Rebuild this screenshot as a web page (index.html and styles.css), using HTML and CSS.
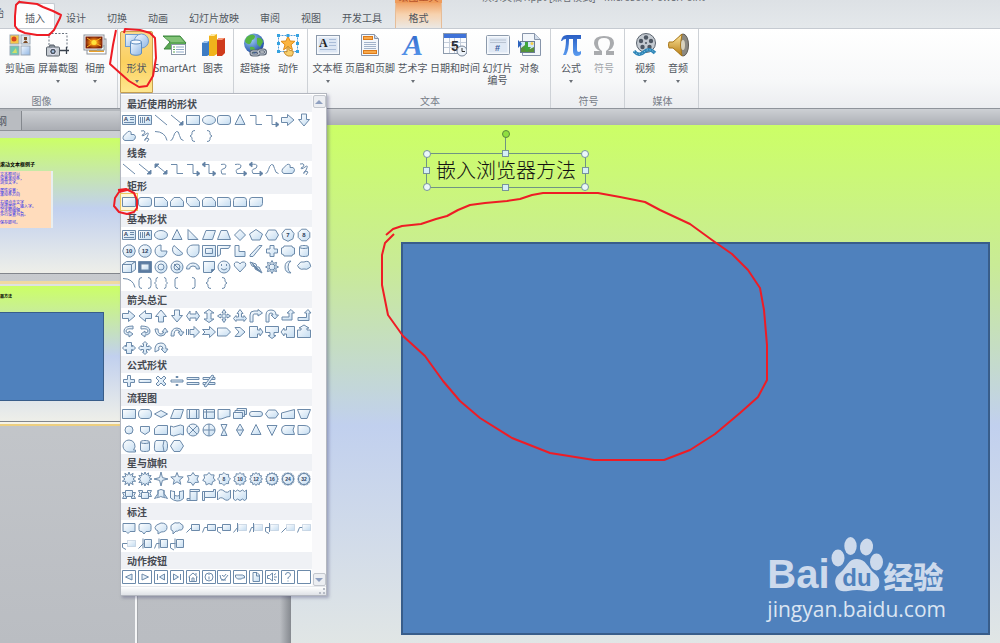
FILE: index.html
```html
<!DOCTYPE html>
<html lang="zh-CN">
<head>
<meta charset="utf-8">
<title>演示文稿 - Microsoft PowerPoint</title>
<link rel="stylesheet" href="styles.css">
</head>
<body>
<svg class="defs" aria-hidden="true">
  <defs>
    <linearGradient id="gShape" x1="0" y1="0" x2="1" y2="1"><stop offset="0" stop-color="#fff"/><stop offset="1" stop-color="#c3dcf1"/></linearGradient>
    <linearGradient id="gBlue" x1="0" y1="0" x2="1" y2="1"><stop offset="0" stop-color="#f4f9ff"/><stop offset="1" stop-color="#8fb6e4"/></linearGradient>
    <radialGradient id="gGlobe" cx=".35" cy=".3" r=".8"><stop offset="0" stop-color="#9fd0f8"/><stop offset="1" stop-color="#123f9c"/></radialGradient>
    <linearGradient id="gGold" x1="0" y1="0" x2="0" y2="1"><stop offset="0" stop-color="#ffe9a0"/><stop offset="1" stop-color="#b67a10"/></linearGradient>
    <linearGradient id="gPi" x1="0" y1="0" x2="0" y2="1"><stop offset="0" stop-color="#2a5fc4"/><stop offset="1" stop-color="#5b9cf0"/></linearGradient>
    <radialGradient id="gPhoto"><stop offset="0" stop-color="#ffe13a"/><stop offset=".5" stop-color="#e07a10"/><stop offset="1" stop-color="#7c1f08"/></radialGradient>
  </defs>
</svg>
<div class="app">
  <header class="top">
    <div class="titlebar"><span class="context-title">绘图工具</span><span class="doc-title">演示文稿1.ppt [兼容模式] - Microsoft PowerPoint</span></div>
    <nav class="tabs">
      <button class="tab tab-cut">开始</button>
      <button class="tab tab-active">插入</button>
      <button class="tab">设计</button>
      <button class="tab">切换</button>
      <button class="tab">动画</button>
      <button class="tab">幻灯片放映</button>
      <button class="tab">审阅</button>
      <button class="tab">视图</button>
      <button class="tab">开发工具</button>
      <button class="tab tab-context">格式</button>
    </nav>
  </header>

  <div class="ribbon">
    <section class="group group-images">
      <div class="tools">
        <button class="tool w32"><svg class="icon" viewBox="0 0 24 24"><rect x="2" y="2" width="9" height="9" fill="#f6c64a" stroke="#9aa7b5"/><circle cx="6" cy="6" r="2.5" fill="#d9471f"/><rect x="13" y="2" width="9" height="9" fill="#dfe5ea" stroke="#9aa7b5"/><path d="M15 10q3-5 5 0zM16 4h3v3h-3z" fill="#7a4a24"/><rect x="2" y="13" width="9" height="9" fill="#6fc7b1" stroke="#9aa7b5"/><path d="M4 20l4-5 1 5z" fill="#cfe06b"/><rect x="13" y="13" width="9" height="9" fill="url(#gBlue)" stroke="#9aa7b5"/></svg><span>剪贴画</span></button>
        <button class="tool w42"><svg class="icon" viewBox="0 0 24 24"><path d="M3 12V.5h18V16" fill="none" stroke="#6b7480" stroke-dasharray="2 1.5"/><path d="M14 17.500h9M20.500 14v7" stroke="#39424e" stroke-width="1.3"/><rect x=".5" y="14" width="13" height="9" rx="1" fill="#c6ccd2" stroke="#59616b"/><path d="M3 14l1-2h4l1 2" fill="#88919b" stroke="#59616b"/><circle cx="7" cy="18.5" r="3.3" fill="#4a5460" stroke="#eef"/><circle cx="7" cy="18.5" r="1.2" fill="#a9c6e8"/></svg><span>屏幕截图</span><i class="arrow"></i></button>
        <button class="tool w30"><svg class="icon" viewBox="0 0 24 24"><rect x="4" y="6" width="19" height="15" fill="#fff" stroke="#8b9199"/><rect x="6" y="8" width="15" height="11" fill="#e9a12a"/><rect x="1" y="2" width="20" height="15" fill="#fff" stroke="#8b9199"/><rect x="2.5" y="3.5" width="17" height="12" fill="url(#gPhoto)"/><path d="M4 5l6 4M18 5l-7 4M4 14l6-4M18 13l-6-3" stroke="#ffb21d"/><circle cx="11" cy="9.5" r="2.5" fill="#ffe33c"/><path d="M14 17q5 0 7-5v5z" fill="#f5f7f9" stroke="#9aa"/></svg><span>相册</span><i class="arrow"></i></button>
      </div>
      <h2 class="group-name">图像</h2>
    </section>

    <section class="group group-illustrations">
      <div class="tools">
        <div class="menu-anchor">
          <button class="tool tool-open w33" aria-expanded="true"><svg class="icon" viewBox="0 0 24 24"><rect x=".5" y="1.5" width="14" height="12" fill="url(#gBlue)" stroke="#6f9bce"/><circle cx="16.5" cy="8" r="7" fill="url(#gBlue)" stroke="#6f9bce"/><path d="M5.500 9v11c0 3 11 3 11 0V9z" fill="url(#gBlue)" stroke="#5d8cc0"/><ellipse cx="11" cy="9" rx="5.500" ry="2" fill="#f4f9ff" stroke="#5d8cc0"/></svg><span>形状</span><i class="arrow"></i></button>
          <div class="shapes-menu">
            <div class="menu-main">
              <div class="gallery" id="gallery"></div>
              <div class="scroll"><button class="scroll-btn" aria-label="向上滚动"><i class="up"></i></button><button class="scroll-btn" aria-label="向下滚动"><i class="down"></i></button></div>
            </div>
            <div class="menu-foot"><svg class="grip" viewBox="0 0 8 8"><path d="M5 1h2v2H5zM5 5h2v2H5zM1 5h2v2H1z" fill="#b7bcc6"/></svg></div>
          </div>
        </div>
        <button class="tool w42"><svg class="icon" viewBox="0 0 24 24"><path d="M0 3h17l6 7-6 6H1l6-7z" fill="#5ba854" stroke="#3e8840"/><path d="M1 4h16l4 5H8z" fill="#83c377"/><rect x="8.5" y="11.5" width="14" height="10" fill="#fff" stroke="#8b98a8"/><path d="M10 14h2M10 16.500h2M10 19h2" stroke="#5ba854"/><path d="M13 14h8M13 16.500h8M13 19h8" stroke="#8fa9c8"/></svg><span>SmartArt</span></button>
        <button class="tool w32"><svg class="icon" viewBox="0 0 24 24"><path d="M1 10l3-2h4v14l-2 1H1z" fill="#3d7cc4"/><path d="M1 10l3-2h4l-2 2z" fill="#9cc4ee"/><path d="M8 3l3-2h5v20l-3 2H8z" fill="#f0b41c"/><path d="M8 3l3-2h5l-3 2z" fill="#ffeaa0"/><path d="M16 7l2-2h6v15l-3 3h-5z" fill="#cf3b1c"/><path d="M16 7l2-2h6l-3 2z" fill="#f69a78"/></svg><span>图表</span></button>
      </div>
    </section>

    <section class="group group-links">
      <div class="tools">
        <button class="tool w34"><svg class="icon" viewBox="0 0 24 24"><circle cx="11" cy="10.5" r="10" fill="url(#gGlobe)"/><path d="M5 3q5-3 7 0 0 3-3 4-1 5-4 4-3-1-3-3 0-3 3-5zM14 5q5-1 6 4l-3 5-3-3zM7 14q5-1 5 3l-2 3q-3-2-3-6z" fill="#57b444"/><g fill="none" stroke="#5b6675" stroke-width="3"><rect x="8" y="18" width="8" height="4" rx="2"/><rect x="15" y="17" width="7.500" height="4" rx="2"/></g><g fill="none" stroke="#c5cdd8"><rect x="8" y="18" width="8" height="4" rx="2"/><rect x="15" y="17" width="7.500" height="4" rx="2"/></g></svg><span>超链接</span></button>
        <button class="tool w30"><svg class="icon" viewBox="0 0 24 24"><rect x="2.5" y="2.5" width="19" height="16" fill="#fdfdfd" stroke="#4c9bdc" stroke-dasharray="2 1"/><path d="M12 3l2 5 5 .3-4 3.500 1.500 5L12 14l-4.500 2.800L9 11.800 5 8.300 10 8z" fill="#fbb440" stroke="#e28c18"/><g fill="#35a2e0"><path d="M1 1h3v3H1zM10.500 1h3v3h-3zM20 1h3v3h-3zM1 9h3v3H1zM20 9h3v3h-3zM1 17h3v3H1zM20 17h3v3h-3z"/></g><path d="M11 14q1-1 2 0v3l4 1q1 2-1 5h-4q-3-1-4-4 1-1 3 0z" fill="#f8cf6c" stroke="#c48a2c"/></svg><span>动作</span></button>
      </div>
    </section>

    <section class="group group-text">
      <div class="tools">
        <button class="tool w31"><svg class="icon" viewBox="0 0 24 24"><rect x=".5" y="2.5" width="23" height="19" fill="#f5f8fc" stroke="#8c9aac"/><rect x="2.5" y="4.5" width="19" height="15" fill="#dce6f4"/><text x="3" y="14" font-family="Liberation Serif" font-weight="700" font-size="12" fill="#222">A</text><path d="M13 6.500h7M13 9.500h7M13 12.500h7M4 16.500h16" stroke="#a9bcd8"/></svg><span>文本框</span><i class="arrow"></i></button>
        <button class="tool w52"><svg class="icon" viewBox="0 0 24 24"><path d="M3.500 1.500h13l4 4v17h-17z" fill="#f4f7fb" stroke="#8795ab"/><path d="M16.500 1.500v4h4" fill="#cfd9e8" stroke="#8795ab"/><rect x="5.5" y="3.5" width="9" height="3" fill="#f9a94a" stroke="#dc7b1b"/><rect x="5.5" y="17.5" width="13" height="3" fill="#f9a94a" stroke="#dc7b1b"/><path d="M6 9.500h12M6 11.500h12M6 13.500h12M6 15.500h12" stroke="#a3b3ca"/></svg><span>页眉和页脚</span></button>
        <button class="tool w31"><svg class="icon" viewBox="0 0 24 24"><text x="2" y="22" font-family="Liberation Serif" font-weight="700" font-style="italic" font-size="30" fill="url(#gPi)">A</text></svg><span>艺术字</span><i class="arrow"></i></button>
        <button class="tool w52"><svg class="icon" viewBox="0 0 24 24"><rect x=".5" y=".5" width="23" height="20" fill="#fbfcfe" stroke="#8c9aac"/><rect x="1" y="1" width="22" height="4" fill="#3f72d8"/><path d="M6.500 5v15M11.500 5v15M17.500 5v15M1 9.500h22M1 14.500h22" stroke="#c5cedb"/><text x="8" y="18" font-family="Liberation Sans" font-weight="700" font-size="14" fill="#2b3038">5</text><circle cx="19" cy="18" r="5" fill="#edf3fa" stroke="#78869a"/><path d="M19 15v3.500h3" fill="none" stroke="#333"/></svg><span>日期和时间</span></button>
        <button class="tool w31"><svg class="icon" viewBox="0 0 24 24"><rect x=".5" y="2.5" width="23" height="19" rx="1" fill="#f5f8fc" stroke="#8c9aac"/><rect x="2.5" y="4.5" width="19" height="15" fill="#dfe8f4"/><path d="M4 7h16M4 9.500h16" stroke="#b8c2d0"/><text x="9" y="18" font-family="Liberation Sans" font-weight="700" font-size="9" fill="#34589c">#</text></svg><span>幻灯片<br>编号</span></button>
        <button class="tool w31"><svg class="icon" viewBox="0 0 24 24"><path d="M4.500.500h12l6 6v16h-18z" fill="#f2f6fb" stroke="#8795ab"/><path d="M16.500.500v6h6" fill="#d3deec" stroke="#8795ab"/><rect x="2.5" y="8.5" width="14" height="11" fill="#cfe6f6" stroke="#6a7d94"/><path d="M3 19v-4l4-3 5 4 4-2v5z" fill="#5a8f3b"/><circle cx="14" cy="10.5" r="1.5" fill="#f6d04a"/><path d="M0 7l4 4-4 4z" fill="#2b62bd"/><path d="M7 9h3v5h3l-4 5-4-5h2z" fill="#3ea53c"/></svg><span>对象</span></button>
      </div>
      <h2 class="group-name">文本</h2>
    </section>

    <section class="group group-symbols">
      <div class="tools">
        <button class="tool w32"><svg class="icon" viewBox="0 0 24 24"><path d="M2 8Q3 2 8 2h14v4h-4v11q0 2 2 2l2-1v3q-1 2-4 2-4 0-4-5V6h-4q0 11-3 16H4q3-6 3-16-3 0-4 2z" fill="url(#gPi)"/></svg><span>公式</span><i class="arrow"></i></button>
        <button class="tool tool-off w32" disabled><svg class="icon" viewBox="0 0 24 24"><path d="M2 22v-4h6Q2 15 2 10 2 3 12 3t10 7q0 5-6 8h6v4h-8v-4q4-3 4-8 0-5-6-5t-6 5q0 5 4 8v4z" fill="#a9abae"/></svg><span>符号</span></button>
      </div>
      <h2 class="group-name">符号</h2>
    </section>

    <section class="group group-media">
      <div class="tools">
        <button class="tool w32"><svg class="icon" viewBox="0 0 24 24"><circle cx="13" cy="10" r="9.500" fill="#c3c9d0" stroke="#5a636e"/><g fill="#4d5662"><circle cx="13" cy="4.500" r="2.200"/><circle cx="18" cy="8" r="2.200"/><circle cx="16.500" cy="14" r="2.200"/><circle cx="9.500" cy="14" r="2.200"/><circle cx="8" cy="8" r="2.200"/><circle cx="13" cy="10" r="1"/></g><path d="M1 18q5 6 10 1t11 1" fill="none" stroke="#2f86b8" stroke-width="3.500"/><path d="M1 18q5 6 10 1t11 1" fill="none" stroke="#a8daf2" stroke-dasharray="1 2"/></svg><span>视频</span><i class="arrow"></i></button>
        <button class="tool w32"><svg class="icon" viewBox="0 0 24 24"><ellipse cx="17" cy="12" rx="5.500" ry="11" fill="#8b8982" stroke="#5c5a55"/><path d="M3 9h4l9-8q-3 11 0 22l-9-8H3q-1-3 0-6z" fill="url(#gGold)" stroke="#a97719"/><ellipse cx="17" cy="12" rx="2" ry="5" fill="#d8d2bd"/></svg><span>音频</span><i class="arrow"></i></button>
      </div>
      <h2 class="group-name">媒体</h2>
    </section>
  </div>

  <main class="workspace">
    <aside class="pane">
      <div class="pane-tabs"><button class="pane-tab">纲</button></div>
      <div class="thumbs">
        <article class="thumb">
          <h3 class="thumb-title">滚动文本框例子</h3>
          <div class="thumb-box"><p>文本框可以<br>设置滚动条，<br>浏览文字。</p><p>属性设置：<br>滚动条方向</p><p>右键点击文字<br>选择属性，输入字。<br>文本框编辑，<br>多行设置为真。</p><p>保存即可。</p></div>
        </article>
        <article class="thumb thumb-selected">
          <h3 class="thumb-title small">器方法</h3>
          <div class="thumb-rect"></div>
        </article>
      </div>
    </aside>
    <div class="splitter"></div>
    <section class="editor">
      <div class="slide">
        <div class="blue-rect"></div>
        <div class="text-box">嵌入浏览器方法
          <i class="stem"></i><i class="knob rotate"></i>
          <i class="knob tl"></i><i class="knob tr"></i><i class="knob bl"></i><i class="knob br"></i>
          <i class="square t"></i><i class="square b"></i><i class="square l"></i><i class="square r"></i>
        </div>
        <div class="watermark">
          <div class="brand"><span class="bai">Bai</span><svg class="paw" viewBox="0 0 54 58"><ellipse cx="8" cy="23" rx="6.500" ry="8.500"/><ellipse cx="20.500" cy="11" rx="6.200" ry="9"/><ellipse cx="36.500" cy="12" rx="6.500" ry="8.500" transform="rotate(10 36.500 12)"/><ellipse cx="46.500" cy="27" rx="6.500" ry="8.500"/><path d="M27 24c-9 0-10 8-16 13-5 4-7 8-5 14 2 5 7 6 12 5q9-2 18 0c6 1 11 0 13-5 1-6 0-9-5-13-6-5-8-14-17-14z"/><text x="27" y="51" text-anchor="middle">du</text></svg><span class="jingyan">经验</span></div>
          <div class="site">jingyan.baidu.com</div>
        </div>
      </div>
    </section>
  </main>

  <svg class="ink" width="1000" height="643" viewBox="0 0 1000 643" aria-hidden="true">
    <path d="M20 1L16 5 15 16 15 26 18 30 25 33 37 35 49 35 54 30 60 18 61 15 53 11 43 7 37 4 28 3 20 2"/>
    <path d="M116 30L113 45 110 64 120 73 129 81 139 87 147 86 153 76 156 58 155 38 150 33 140 30 125 29 124 33"/>
    <path d="M118 190L126 189 134 193 137 200 137 208 134 212 127 214 119 212 114 206 115 198 119 192 127 190"/>
    <path d="M386 235L393 229 402 226 421 224 436 219 447 216 458 210 470 205 485 203 507 201 520 199 532 195 543 193 598 193 620 197 645 202 660 210 690 224 712 240 732 254 748 270 760 288 764 310 767 345 767 380 758 397 740 413 715 434 690 450 664 460 594 460 550 453 512 438 480 418 460 401 443 381 425 356 403 336 388 315 382 285 382 255 385 243 394 234"/>
  </svg>
</div>
<script src="gallery.js"></script>
</body>
</html>
```
FILE: styles.css
```css
* { box-sizing: border-box; }
body {
  margin: 0;
  overflow: hidden;
  font-family: "Noto Sans", "Noto Sans CJK SC", sans-serif;
  font-size: 10px;
  line-height: 12px;
  color: #50565e;
}
button {
  margin: 0;
  padding: 0;
  border: 0;
  background: none;
  font: inherit;
  color: inherit;
}
h2, h3, p { margin: 0; font-weight: 400; font-size: inherit; }
.defs { position: absolute; width: 0; height: 0; }
.app { position: relative; display: flex; flex-direction: column; height: 100vh; overflow: hidden; }

/* Title bar and tabs */
.top { background: linear-gradient(#dde1e5, #e4e8eb); border-bottom: 1px solid #c5cad1; }
.titlebar { display: flex; align-items: flex-end; height: 3px; overflow: hidden; white-space: nowrap; color: #6b6f75; }
.context-title { width: 47px; margin-left: 395px; text-align: center; background: #ef9c5c; color: #b8542a; }
.doc-title { margin-left: 40px; }
.tabs { display: flex; gap: 1px; height: 25px; }
.tab { padding: 4px 10px 0; white-space: nowrap; }
.tab-cut { display: flex; justify-content: flex-end; width: 14px; padding: 4px 10px 0 0; overflow: hidden; }
.tab-active { background: linear-gradient(#fdfdfe, #fff); border: 1px solid #c5cad1; border-bottom: 0; padding: 3px 9px 0; border-radius: 2px 2px 0 0; }
.tab-context { width: 47px; margin-left: 2px; background: linear-gradient(#f0a468, #f7d2ae 45%, #ebe8e4); border: solid #e6bd98; border-width: 0 1px; }

/* Ribbon */
.ribbon { display: flex; height: 80px; background: linear-gradient(#fff, #f7f8f9 65%, #ebedf0); border-bottom: 1px solid #8f949b; }
.group { display: flex; flex-direction: column; padding: 2px 2px 0 4px; border-right: 1px solid #cdd1d6; }
.tools { display: flex; gap: 1px; height: 62px; }
.tool { display: flex; flex-direction: column; align-items: center; height: 62px; padding-top: 2px; white-space: nowrap; }
.icon { width: 24px; height: 24px; margin-bottom: 5px; }
.w30 { width: 30px; }
.w31 { width: 31px; }
.w32 { width: 32px; }
.w33 { width: 33px; }
.w34 { width: 34px; }
.w42 { width: 42px; }
.w52 { width: 52px; }
.tool-open { background: linear-gradient(#fbd98c, #fbd05f 50%, #fee78f); border: 1px solid #c9a14e; padding-top: 1px; border-radius: 2px 2px 0 0; }
.tool-off { color: #a3a6aa; }
.arrow { margin-top: 6px; border: 2px solid transparent; border-top: 3px solid #6b7077; border-bottom: 0; }
.group-name { padding-top: 2px; text-align: center; color: #767c87; }
.group-images { width: 118px; }
.group-images .group-name { padding-right: 36px; }
.group-illustrations { width: 116px; padding: 2px 2px 0; }
.group-links { width: 74px; }
.group-text { width: 243px; }
.group-symbols { width: 74px; }
.group-media { width: 74px; }

/* Shapes menu */
.menu-anchor { position: relative; }
.shapes-menu {
  position: absolute;
  z-index: 5;
  top: 62px;
  left: 0;
  width: 207px;
  padding-top: 1px;
  background: #fff;
  border: 1px solid #b3b7bf;
  box-shadow: 2px 2px 3px rgba(60, 60, 110, .35);
}
.menu-main { display: flex; }
.gallery { width: 191px; padding-bottom: 1px; }
.gallery-name { height: 17px; padding: 2px 0 0 6px; background: #eff1f5; font-weight: 700; line-height: 14px; color: #464a52; }
.gallery-grid { display: grid; grid-template-columns: repeat(12, minmax(0, 1fr)); grid-auto-rows: 16px; }
.shape { display: flex; justify-content: center; }
.shape-svg { flex: none; width: 16px; height: 16px; fill: url(#gShape); stroke: #6c8aaa; stroke-linejoin: round; }
.shape-svg .bare { fill: none; }
.shape-svg .solid { fill: #5b7ba1; }
.shape-svg .plain { fill: #fff; }
.shape-svg .ghost { stroke: #a9bdd3; stroke-dasharray: 1 1; }
.shape-svg text { fill: #2c3e5c; stroke: none; font-family: "Liberation Sans", sans-serif; font-weight: 700; text-anchor: middle; }
.shape-picked { background: #fff7d8; box-shadow: 0 0 0 1px #ecc75c; }
.scroll { display: flex; flex: 1; flex-direction: column; align-items: center; justify-content: space-between; background: #f8f8fa; }
.scroll-btn { display: grid; place-items: center; width: 13px; height: 13px; background: #eceef2; border: 1px solid #c3c7ce; border-radius: 2px; }
.up { border: 4px solid transparent; border-top: 0; border-bottom: 4px solid #8fa0c0; }
.down { border: 4px solid transparent; border-bottom: 0; border-top: 4px solid #8fa0c0; }
.menu-foot { display: flex; justify-content: flex-end; height: 9px; border-top: 1px solid #e6e8ec; background: linear-gradient(#fff, #dfe2e7); }
.grip { width: 8px; height: 8px; }

/* Workspace */
.workspace { display: grid; grid-template-columns: 135px 3px 1fr; flex: 1; min-height: 0; }
.pane { display: flex; flex-direction: column; background: linear-gradient(#cdd0d4, #c4c7cb 50%, #babdc2); overflow: hidden; }
.pane-tabs { height: 22px; margin-bottom: 7px; background: linear-gradient(#cccfd3, #abaeb4); border-top: 2px solid #b4b8bd; border-bottom: 1px solid #8e9298; }
.pane-tab { display: flex; justify-content: flex-end; align-items: center; width: 22px; height: 19px; padding-right: 14px; border-right: 1px solid #84888e; background: #b9bcc1; overflow: hidden; }
.thumbs { display: flex; flex-direction: column; gap: 12px; }
.thumb { height: 136px; padding-top: 24px; background: linear-gradient(#ccff66, #c1d0ee 52%, #eeefe9); border-bottom: 1px solid #82868c; }
.thumb-title { height: 9px; font-size: 5px; line-height: 5px; font-weight: 700; color: #000; }
.thumb-box { width: 53px; height: 57px; padding-top: 2px; background: #ffdcbc; border-right: 2px solid #e8eef0; color: #2222ee; font-size: 4px; line-height: 4px; font-weight: 700; }
.thumb-box p { margin-bottom: 4px; }
.thumb-selected { padding-top: 8px; box-shadow: 0 -2px #dfe1e2, 0 -5px #f0d9a2, 0 2px #f6f3e6, 0 4px #edcf80; }
.thumb-title.small { height: 18px; font-size: 4px; }
.thumb-rect { width: 104px; height: 89px; background: #4f81bd; border: 1px solid #385d8a; border-left: 0; }
.splitter { background: #f5f6f7; border-right: 1px solid #a3a6ab; }
.editor { display: flex; padding: 16px 0 0 153px; background: linear-gradient(90deg, transparent 142px, #85898f 153px) no-repeat 0 16px, linear-gradient(#cdd0d4, #adb0b6 16px, #c4c7cb 17px, #babdc2); }
.slide { position: relative; flex: 1; background: linear-gradient(#ccff66, #c9eb96 27%, #c1d0ee 58%, #e8ebe3 110%); }
.blue-rect { position: absolute; inset: 117px 10px 8px 110px; background: #4f81bd; border: 2px solid #385d8a; }
.text-box {
  position: absolute;
  top: 28px;
  left: 135px;
  width: 160px;
  height: 35px;
  border: 1px solid #6f9483;
  text-align: center;
  font-size: 20px;
  line-height: 33px;
  font-weight: 300;
  white-space: nowrap;
  color: #111;
}
.knob, .square { position: absolute; width: 8px; height: 8px; background: #eaf7f9; border: 1px solid #78949a; }
.knob { border-radius: 50%; }
.square { width: 7px; height: 7px; background: #d5eff7; }
.tl { top: -4px; left: -4px; }
.tr { top: -4px; right: -4px; }
.bl { bottom: -4px; left: -4px; }
.br { bottom: -4px; right: -4px; }
.t { top: -4px; left: 75px; }
.b { bottom: -4px; left: 75px; }
.l { top: 13px; left: -4px; }
.r { top: 13px; right: -4px; }
.stem { position: absolute; top: -19px; left: 78px; height: 18px; border-left: 1px solid #6f9483; }
.rotate { top: -24px; left: 75px; background: #8fe03f; border-color: #5c8a3c; }

/* Watermark */
.watermark { position: absolute; right: 54px; bottom: 20px; color: #cddaec; }
.brand { display: flex; align-items: flex-end; height: 58px; }
.bai { font: 700 40px/38px "Liberation Sans", sans-serif; }
.paw { width: 54px; height: 58px; fill: #cddaec; }
.paw text { font: 700 24px "Liberation Sans", sans-serif; fill: #4f81bd; }
.jingyan { padding-bottom: 3px; font-family: "Noto Sans CJK SC", sans-serif; font-weight: 900; font-size: 30px; line-height: 30px; }
.site { padding-top: 2px; font-family: "Open Sans", "Noto Sans", sans-serif; font-size: 21px; line-height: 28px; color: #dbe5f2; }

.ink { position: absolute; z-index: 10; top: 0; left: 0; pointer-events: none; fill: none; stroke: #ee1c25; stroke-width: 2; stroke-linejoin: round; }
```
FILE: gallery.js
```js
// Shape outlines are drawn on a 16x16 grid. A plain string is a filled path;
// open() makes an unfilled one, and anything starting with "<" is raw markup.
const path = (d, cls = '') => `<path class="${cls}" d="${d}"/>`;
const open = d => path(d, 'bare');
const ghost = d => path(d, 'ghost');

const polygon = (n, r, turn = 0, inner = r) => {
  const pts = [];
  const count = inner === r ? n : n * 2;
  for (let i = 0; i < count; i++) {
    const a = -Math.PI / 2 + turn + (i * 2 * Math.PI) / count;
    const q = i % 2 ? inner : r;
    pts.push(`${(8 + q * Math.cos(a)).toFixed(1)} ${(8 + q * Math.sin(a)).toFixed(1)}`);
  }
  return `M${pts.join('L')}Z`;
};
const star = (n, r, inner) => polygon(n, r, 0, inner);
const label = (t, size = 6) => `<text x="8" y="10" font-size="${size}">${t}</text>`;
const numbered = (n, sides) => path(polygon(sides, 6.3, Math.PI / sides)) + label(n);
const seal = n => path(star(Math.min(n, 20), 6.5, 5)) + label(n, 5);
const action = glyph => path('M1.500 1.500h13v13h-13z', 'plain') + glyph;

const textBox = path('M1.500 3.500h13v9h-13z') + '<text x="5" y="9" font-size="6">A</text>' + open('M9 5.500h4M9 7.500h4M3 10.500h10');
const vertBox = path('M1.500 3.500h13v9h-13z') + '<text x="11" y="9" font-size="6">A</text>' + open('M3.500 5v6M5.500 5v6M7.500 5v6');
const rect = 'M1.500 3.500h13v9h-13z';
const round = 'M4 3.500h8q2.500 0 2.500 2.500v4q0 2.500-2.500 2.500H4Q1.500 12.500 1.500 10V6Q1.500 3.500 4 3.500z';
const ellipse = 'M1.500 8a6.500 4.500 0 1 1 13 0a6.500 4.500 0 1 1-13 0z';
const circle = 'M2 8a6 6 0 1 1 12 0a6 6 0 1 1-12 0z';
const triangle = 'M8 2.500L13 12.500H3z';
const line = open('M2 3l12 10');
const lineArrow = open('M2 3l11 9') + path('M14 13h-4l4-4z', 'solid');
const lineTwo = lineArrow + path('M2 3h4L2 7z', 'solid');
const elbow = open('M2 3.500h6v9h6');
const elbowArrow = elbow + path('M12 10l3 2.500-3 2.500z', 'solid');
const elbowTwo = elbowArrow + path('M4 1L1 3.500 4 6z', 'solid');
const sCurve = open('M5 3.500q5-1 5 1.500t-3 3-1 5h4');
const sArrow = open('M3 3.500q6-1 6 1.500t-3 3-1 4.500h7') + path('M12 10l3 2.500-3 2.500z', 'solid');
const sTwo = sArrow + path('M4 1L1 3.500 4 6z', 'solid');
const wave = open('M1.500 12.500q2 0 3-4t3-5 3 4 4 5');
const blob = 'M2.500 8L7 3.500q4-1 3 3 4-1 4.500 2 0 3-2.500 4H4q-3-1-1.500-4.500z';
const scribble = open('M4 3q4-1 4 1T5 7q0 2 4-1t1 3-2 2q1-2 4 0l-2 3');
const arc = open('M2 3.500q10 0 12 9');
const braceL = open('M10 2.500q-3 0-3 2v2L5 8l2 1.500v2q0 2 3 2');
const braceR = open('M6 2.500q3 0 3 2v2L11 8 9 9.500v2q0 2-3 2');
const right = 'M1.500 5.500h6v-3L14 8l-6.500 5.500v-3h-6z';
const left = 'M14.500 5.500h-6v-3L2 8l6.500 5.500v-3h6z';
const up = 'M5.500 14V8.500h-3L8 2l5.500 6.500h-3V14z';
const down = 'M5.500 2v5.500h-3L8 14l5.500-6.500h-3V2z';
const plus = 'M6 2.500h4V6h3.500v4H10v3.500H6V10H2.500V6H6z';
const hexagon = 'M4.500 3h7L14.500 8l-3 5h-7L1.500 8z';
const can = path('M3.500 4v8c0 2 9 2 9 0V4') + path('M3.500 4c0-2 9-2 9 0s-9 2-9 0z');
const parallelogram = 'M5 3.500h9.500l-3 9H1.500z';
const lineBox = d => open(d) + path('M6.500 4.500h8v6h-8z');
const ghostBox = d => open(d) + ghost('M6.500 4.500h8v6h-8z');
const sideBox = d => open(d) + path('M7.500 3.500h7v8h-7z') + open('M6 2.500v10');

const sections = [
  ['最近使用的形状', [textBox, vertBox, line, lineArrow, rect, ellipse, round, triangle, elbow, elbowArrow, right, down, blob, scribble, arc, wave, braceL, braceR]],
  ['线条', [line, lineArrow, lineTwo, elbow, elbowArrow, elbowTwo, sCurve, sArrow, sTwo, wave, blob, scribble]],
  ['矩形', [
    rect, round,
    'M1.500 3.500h9l4 4v5h-13z',
    'M5 3.500h6l3.500 4v5h-13v-5z',
    'M1.500 3.500H11l3.500 4v5H5l-3.500-4z',
    'M4 3.500h7l3.500 4v5h-13V6z',
    'M1.500 3.500H12q2.500 0 2.500 3v6h-13z',
    'M4 3.500h8q2.500 0 2.500 3v6h-13v-6q0-3 2.500-3z',
    'M4 3.500h10.500v6q0 3-3 3h-10v-6q0-3 2.500-3z'
  ]],
  ['基本形状', [
    textBox, vertBox, ellipse, triangle, 'M3 2.500l10 10H3z', parallelogram,
    'M5 3.500h6l3.500 9h-13z', 'M8 2.500L13.500 8 8 13.500 2.500 8z', 'M8 2.500L14.500 7 12 13H4L1.500 7z', hexagon, numbered(7, 7), numbered(8, 8),
    numbered(10, 10), numbered(12, 12), 'M8 8V2a6 6 0 1 0 6 6z', 'M5 2.500A6 6 0 1 0 14 10.500z', 'M14 2v6a6 6 0 1 1-6-6z',
    path('M1.500 2.500h13v11h-13z') + path('M4.500 5.500h7v5h-7z'),
    'M1.500 2.500h13l-2 3h-8v6l-3 2z', 'M3 2.500h4v6h6v5H3z', 'M2 12L11 2.500h3L5 13.500H2z', plus,
    'M4 3h8q0 2 2.500 2v6Q12 11 12 13H4q0-2-2.500-2V5Q4 5 4 3z', can,
    path('M1.500 5.500h9v8h-9z') + path('M1.500 5.500l4-3h9l-4 3z') + path('M10.500 5.500l4-3v8l-4 3z'),
    path('M1.500 2.500h13v11h-13z', 'solid') + path('M4 5h8v6H4z'),
    path(circle) + path('M5 8a3 3 0 1 1 6 0a3 3 0 1 1-6 0z'),
    path(circle) + open('M5 8a3 3 0 1 1 6 0a3 3 0 1 1-6 0zM5 5l6 6'),
    'M1.500 10a6.500 6 0 0 1 13 0h-3a3.500 3 0 0 0-7 0z',
    path('M2.500 2.500h11v8l-3 3h-8z') + path('M13.500 10.500h-3v3z', 'solid'),
    path(circle) + open('M5 9.500q3 3 6 0M5.500 5v2M10.500 5v2'),
    'M8 13L2.500 7q-1-4 2.500-4 2 0 3 2 1-2 3-2 3.500 0 2.500 4z',
    path('M2 3l6 2 1 3 2 0 3 6-7-4 0-2-3-1z') + path('M4 4l9 9-5-3z', 'solid'),
    path(star(8, 6.5, 4)) + path('M5 8a3 3 0 1 1 6 0a3 3 0 1 1-6 0z'),
    'M11 2Q5 2 5 8t6 6q-3-2-3-6t3-6z',
    'M3 9Q0 6 3 5q1-3 5-2 5-2 6 2 2 3-1 4-2 2-5 1-3 1-5-1z',
    arc, open('M5 2.500q-3 0-3 3v5q0 3 3 3M11 2.500q3 0 3 3v5q0 3-3 3'),
    open('M5 2.500q-2 0-2 2v2L1.500 8 3 9.500v2q0 2 2 2M11 2.500q2 0 2 2v2L14.500 8 13 9.500v2q0 2-2 2'),
    open('M9 2.500q-3 0-3 2v7q0 2 3 2'), open('M7 2.500q3 0 3 2v7q0 2-3 2'), braceL, braceR
  ]],
  ['箭头总汇', [
    right, left, up, down,
    'M1.500 8L5 3v3h6V3l3.500 5L11 13v-3H5v3z', 'M8 1.500L13 5h-3v6h3l-5 3.500L3 11h3V5H3z',
    'M8 1.500l2 3H9V7h2.500V6l3 2-3 2V9H9v2.500h1l-2 3-2-3h1V9H4.500v1l-3-2 3-2v1H7V4.500H6z',
    'M8 1.500l3 4H9.500V9H12V7.500l2.500 3-2.500 3V12H4v1.500l-2.500-3L4 7.500V9h2.500V5.500H5z',
    'M2 14V7q0-4 4-4h4V1.500L14.500 5 10 8V6H6q-1 0-1 2v6z',
    'M2 14V7q0-5 5-5t5 5h2.500L11 11 7 7h2q0-2-2-2T5 7v7z',
    'M2 12v-3h7V5H7l4-3.500L14.500 5H12v7z', 'M2 12.500v-3h8.500V5H8.500L12 1.500 15 5h-2v7.500z',
    'M12 2Q3 2 3 7q0 4 5 4v2l4-3-4-3v2Q5 9 5 7q0-3 7-2z', 'M4 2q9 0 9 5 0 4-5 4v2L4 10l4-3v2q3 0 3-2 0-3-7-2z',
    'M2 5q1 7 6 7 4 0 5-4h2l-3-4-3 4h2q-1 2-3 2-3 0-3-5z', 'M2 12q0-8 6-8 4 0 5 4h2l-3 4-3-4h2q-1-2-3-2-3 0-3 6z',
    path('M5 5.500h4v-3L14.500 8 9 13.500v-3H5z') + open('M1.500 5v6M3.500 5v6'),
    'M1.500 5.500h7v-3L14.500 8l-6 5.500v-3h-7L4 8z', 'M1.500 4h9l4 4-4 4h-9z', 'M3 3.500h5L13 8l-5 4.500H3L7 8z',
    'M1.500 2.500h8V6H12V4l3 4-3 4v-2H9.500v3.500h-8z', 'M1.500 2.500h13v6H10v3h2l-4 3-4-3h2v-3H1.500z',
    'M14.500 2.500h-8V6H4V4L1 8l3 4v-2h2.500v3.500h8z', 'M1.500 13.500V6H5V4H3l5-3 5 3h-2v2h3.500v7.500z',
    'M5.500 2.500h5v4h1V5l3 3-3 3V9.500h-1v4h-5v-4h-1V11l-3-3 3-3v1.500h1z',
    'M8 1.500L10.500 4H9.500v2.500H12V5.500L14.500 8 12 10.500v-1H9.500V12h1L8 14.500 5.500 12h1V9.500H4v1L1.500 8 4 5.500v1h2.500V4h-1z',
    'M2 12q-1-9 6-9 5 0 5 6h2l-3 4-4-4h2q0-3-3-3-2 0-1 4z'
  ]],
  ['公式形状', [
    'M6.500 2.500h3v4h4v3h-4v4h-3v-4h-4v-3h4z', 'M2 6.500h12v3H2z', 'M5 3l3 3 3-3 2 2-3 3 3 3-2 2-3-3-3 3-2-2 3-3-3-3z',
    path('M2 7h12v2H2z') + path('M7 3.500h2v1H7zM7 11.500h2v1H7z'), path('M2 4.500h12v2H2z') + path('M2 9.500h12v2H2z'),
    path('M2 4.500h12v2H2z') + path('M2 9.500h12v2H2z') + path('M11 2l2 1-8 11-2-1z')
  ]],
  ['流程图', [
    rect, 'M5 3.500h6q3.500 0 3.500 4.500t-3.500 4.500H5Q1.500 12.500 1.500 8T5 3.500z', 'M8 4.500L14.500 8 8 11.500 1.500 8z', parallelogram,
    path('M2 3.500h12v9H2z') + open('M4.500 3.500v9M11.500 3.500v9'), path('M2.500 3.500h11v9h-11z') + open('M5.500 3.500v9M2.500 6h11'),
    'M2 3.500h12v7q-3 0-6 1.500t-6 1z', path('M5 2.500h9.500v6H5z') + path('M3 4.500h9.500v6H3z') + path('M1.500 6.500h9v6h-9z'),
    'M4 5.500h8q2.500 0 2.500 2.500T12 10.500H4Q1.500 10.500 1.500 8T4 5.500z', 'M4.500 4h7l3 4-3 4h-7l-3-4z', 'M1.500 7l13-3.500v9h-13z', 'M1.500 3.500h13l-3.500 9H5z',
    'M4 8a4 4 0 1 1 8 0a4 4 0 1 1-8 0z', 'M3.500 4.500h9v5L8 12.500 3.500 9.500z', 'M5 3.500h9.500v9h-13v-6z',
    'M1.500 4q3 2 6.500 0t6.500 0v9q-3-2-6.500 0t-6.500 0z', path(circle) + open('M4 4l8 8M12 4l-8 8'), path(circle) + open('M8 2v12M2 8h12'),
    'M5 2.500h6L8.500 8l2.500 5.500H5L7.500 8z', path('M8 2l3.500 6L8 14 4.500 8z') + open('M4.500 8h7'), triangle, 'M3 3.500h10L8 13.500z',
    'M5 3.500h9.500q-3 4.500 0 9H5Q1.500 12 1.500 8T5 3.500z', 'M2 3.500h6q6 0 6 4.500t-6 4.500H2z',
    path('M8 2a6 6 0 1 0 0 12h6.500v-2H12.500A6 6 0 0 0 8 2z'), can, path('M3 2.500h9q2.500 0 2.500 5.500T12 13.500H3Q1 13 1.500 8 1.500 3 3 2.500z') + open('M11 2.500q-2 5 0 11'), 'M5 2.500h6L14.500 8 11 13.500H5L1.500 8z'
  ]],
  ['星与旗帜', [
    star(10, 7, 4), star(12, 7, 4.5), star(4, 7, 2), star(5, 6.5, 2.8), star(6, 6.5, 4), star(7, 6.5, 4.5),
    seal(8), seal(10), seal(12), seal(16), seal(24), seal(32),
    path('M1.500 5.500h4v6h-4L3 8.500z') + path('M14.500 5.500h-4v6h4L13 8.500z') + path('M4.500 3.500h7v6h-7z'),
    path('M1.500 3.500h4v6h-4L3 6.500z') + path('M14.500 3.500h-4v6h4L13 6.500z') + path('M4.500 5.500h7v6h-7z'),
    path('M5 3.500q3-2 6 0v3l3.500 5q-2-1-4-1-3-2-5 0-2 0-4 1L5 6.500z') + open('M5 3v7M11 3v7'),
    path('M1.500 3.500q2 1 4 1v4q3 1 5 0v-4q2 0 4-1v8q-3 3-6.500 2.500T1.500 11z') + open('M5.500 4v8M10.500 4v8'),
    path('M5 2.500h9.500v2H12v9H2v-2h3z') + open('M5 4.500h7M5 11.500v2'), path('M1.500 4.500h11v-2h2v8h-11v3h-2z') + open('M3.500 4.500v6'),
    'M1.500 5q3-4 6.500-1t6.500-1v8q-3 4-6.500 1t-6.500 1z', 'M1.500 3q2 3 4 0 2.500 3 5 0 2 3 4 0v9q-2 3-4 0-2.500 3-5 0-2 3-4 0z'
  ]],
  ['标注', [
    'M2 3.500h12v8H9l-2 2-2-2H2z', 'M4 3.500h8q2 0 2 2v4q0 2-2 2H9l-2 2.500-2-2.500H4q-2 0-2-2v-4q0-2 2-2z',
    'M8 3q6 0 6 4.500T8 12l-3 2v-3Q2 10 2 7.500T8 3z', 'M4 4q2-2 4-1 3-1 4 1 3 1 2 4-1 3-4 2-2 2-3 1l-3 3v-3q-3-1-2-3-1-3 2-4z',
    lineBox('M1.500 12.500l5-5'), lineBox('M1.500 12.500l2-5h3'), lineBox('M5 13.500l-3.500-2v-4h5'),
    ghostBox('M1.500 12.500l4-5M5.500 3v9'), ghostBox('M1.500 12.500l2-5h2M5.500 3v9'), ghostBox('M5 13.500l-3.500-2v-4h4M5.500 3v9'),
    ghostBox('M1.500 12.500l5-5'), ghostBox('M1.500 12.500l2-5h3'), ghostBox('M5 13.500l-3.500-2v-4h5'),
    sideBox('M1.500 12.500l5-5'), sideBox('M1.500 12.500l2-5h3'), sideBox('M5 14l-3.500-2V7.500h5')
  ]],
  ['动作按钮', [
    action(path('M11 5v6L4.500 8z')), action(path('M5 5v6l6.500-3z')), action(path('M11.500 5v6L6.500 8z') + open('M4.500 5v6')),
    action(path('M4.500 5v6l5-3z') + open('M11.500 5v6')), action(open('M3.500 8L8 4l4.500 4M4.500 7.500v5h7v-5M7 12V9h2v3M11 6V4')),
    action(open('M4 8a4 4 0 1 1 8 0a4 4 0 1 1-8 0zM8 7.500v3M8 5v1')), action(open('M4 6l1 4q3 2 4 0l3-4M6 6q2 3 4-1M5 11h5')),
    action(path('M3.500 6h7l2 1v2h-2l-1 1h-4l-2-2z')), action(path('M5 3.500h4l2.500 2.500v6.500H5z') + open('M8.500 4v3h3')),
    action(open('M3.500 6.500h2l3-2.500v8l-3-2.500h-2zM10 8h3M10 6l2-1.500M10 10l2 1.500')), action(open('M5.500 6q0-2.500 2.500-2.500t2.500 2.500Q10 8 8 8.500V10M8 11.500v1')), action('')
  ]]
];

const gallery = document.getElementById('gallery');
gallery.innerHTML = sections.map(([name, shapes]) => `
  <h3 class="gallery-name">${name}</h3>
  <div class="gallery-grid">${shapes.map((s, i) => `
    <button class="shape${name === '矩形' && i === 0 ? ' shape-picked' : ''}" aria-label="${name} ${i + 1}">
      <svg class="shape-svg" viewBox="0 0 16 16">${s.startsWith('<') ? s : path(s)}</svg>
    </button>`).join('')}
  </div>`).join('');
```
